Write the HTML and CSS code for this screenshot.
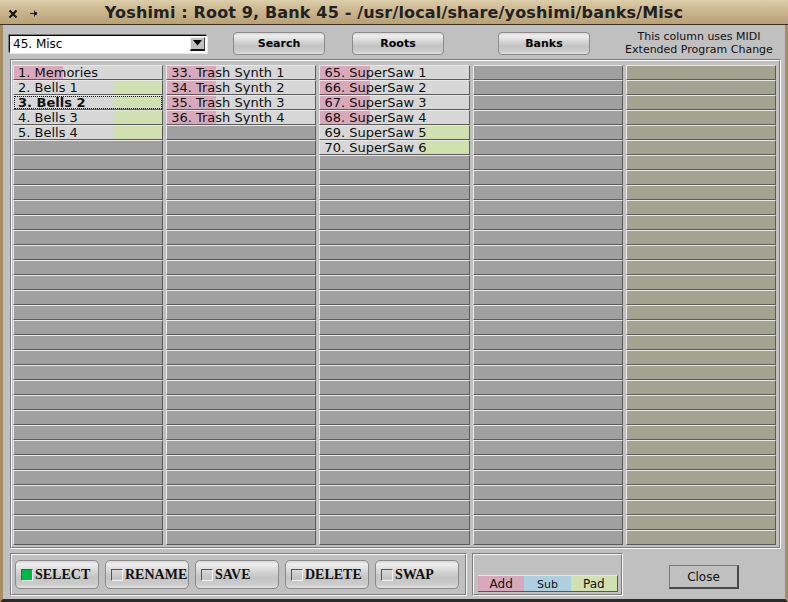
FILE: index.html
```html
<!DOCTYPE html>
<html>
<head>
<meta charset="utf-8">
<title>Yoshimi Banks</title>
<link rel="stylesheet" href="styles.css">
</head>
<body>
<div class="window">
  <div class="titlebar">
    <div class="tb-icons">
      <svg class="tb-x" width="10" height="10" viewBox="0 0 10 10"><path d="M1.5 1.5 L8.5 8.5 M8.5 1.5 L1.5 8.5" stroke="#111" stroke-width="2" fill="none"/></svg>
      <svg class="tb-pin" width="8" height="7" viewBox="0 0 8 7"><path d="M0 3.5 H4" stroke="#222" stroke-width="1" fill="none"/><rect x="4" y="0.5" width="1" height="6" fill="#222"/><rect x="5" y="2" width="2" height="3" fill="#222"/></svg>
    </div>
    <div class="title">Yoshimi : Root 9, Bank 45 - /usr/local/share/yoshimi/banks/Misc</div>
    <div></div>
  </div>
  <div class="body">
    <div class="toprow">
      <div class="choice">
        <span class="choice-text">45. Misc</span>
        <span class="choice-btn"><svg width="9" height="6" viewBox="0 0 9 6"><path d="M0 0 H9 L4.5 5.5 Z" fill="#000"/></svg></span>
      </div>
      <button class="pbtn search">Search</button>
      <button class="pbtn roots">Roots</button>
      <button class="pbtn banks">Banks</button>
      <div class="note">This column uses MIDI<br>Extended Program Change</div>
    </div>

    <div class="panel"><div class="panel-in">
      <div class="col">
        <div class="cell add">1. Memories</div>
        <div class="cell pad">2. Bells 1</div>
        <div class="cell pad sel">3. Bells 2</div>
        <div class="cell pad">4. Bells 3</div>
        <div class="cell pad">5. Bells 4</div>
        <div class="cell e"></div><div class="cell e"></div><div class="cell e"></div><div class="cell e"></div><div class="cell e"></div><div class="cell e"></div><div class="cell e"></div><div class="cell e"></div><div class="cell e"></div><div class="cell e"></div>
        <div class="cell e"></div><div class="cell e"></div><div class="cell e"></div><div class="cell e"></div><div class="cell e"></div><div class="cell e"></div><div class="cell e"></div><div class="cell e"></div><div class="cell e"></div><div class="cell e"></div>
        <div class="cell e"></div><div class="cell e"></div><div class="cell e"></div><div class="cell e"></div><div class="cell e"></div><div class="cell e"></div><div class="cell e"></div>
      </div>
      <div class="col">
        <div class="cell add">33. Trash Synth 1</div>
        <div class="cell add">34. Trash Synth 2</div>
        <div class="cell add">35. Trash Synth 3</div>
        <div class="cell add">36. Trash Synth 4</div>
        <div class="cell e"></div><div class="cell e"></div><div class="cell e"></div><div class="cell e"></div><div class="cell e"></div><div class="cell e"></div><div class="cell e"></div><div class="cell e"></div><div class="cell e"></div><div class="cell e"></div>
        <div class="cell e"></div><div class="cell e"></div><div class="cell e"></div><div class="cell e"></div><div class="cell e"></div><div class="cell e"></div><div class="cell e"></div><div class="cell e"></div><div class="cell e"></div><div class="cell e"></div>
        <div class="cell e"></div><div class="cell e"></div><div class="cell e"></div><div class="cell e"></div><div class="cell e"></div><div class="cell e"></div><div class="cell e"></div><div class="cell e"></div>
      </div>
      <div class="col">
        <div class="cell add">65. SuperSaw 1</div>
        <div class="cell add">66. SuperSaw 2</div>
        <div class="cell add">67. SuperSaw 3</div>
        <div class="cell add">68. SuperSaw 4</div>
        <div class="cell pad">69. SuperSaw 5</div>
        <div class="cell pad">70. SuperSaw 6</div>
        <div class="cell e"></div><div class="cell e"></div><div class="cell e"></div><div class="cell e"></div><div class="cell e"></div><div class="cell e"></div><div class="cell e"></div><div class="cell e"></div><div class="cell e"></div><div class="cell e"></div>
        <div class="cell e"></div><div class="cell e"></div><div class="cell e"></div><div class="cell e"></div><div class="cell e"></div><div class="cell e"></div><div class="cell e"></div><div class="cell e"></div><div class="cell e"></div><div class="cell e"></div>
        <div class="cell e"></div><div class="cell e"></div><div class="cell e"></div><div class="cell e"></div><div class="cell e"></div><div class="cell e"></div>
      </div>
      <div class="col">
        <div class="cell e"></div><div class="cell e"></div><div class="cell e"></div><div class="cell e"></div><div class="cell e"></div><div class="cell e"></div><div class="cell e"></div><div class="cell e"></div><div class="cell e"></div><div class="cell e"></div>
        <div class="cell e"></div><div class="cell e"></div><div class="cell e"></div><div class="cell e"></div><div class="cell e"></div><div class="cell e"></div><div class="cell e"></div><div class="cell e"></div><div class="cell e"></div><div class="cell e"></div>
        <div class="cell e"></div><div class="cell e"></div><div class="cell e"></div><div class="cell e"></div><div class="cell e"></div><div class="cell e"></div><div class="cell e"></div><div class="cell e"></div><div class="cell e"></div><div class="cell e"></div>
        <div class="cell e"></div><div class="cell e"></div>
      </div>
      <div class="col">
        <div class="cell x"></div><div class="cell x"></div><div class="cell x"></div><div class="cell x"></div><div class="cell x"></div><div class="cell x"></div><div class="cell x"></div><div class="cell x"></div><div class="cell x"></div><div class="cell x"></div>
        <div class="cell x"></div><div class="cell x"></div><div class="cell x"></div><div class="cell x"></div><div class="cell x"></div><div class="cell x"></div><div class="cell x"></div><div class="cell x"></div><div class="cell x"></div><div class="cell x"></div>
        <div class="cell x"></div><div class="cell x"></div><div class="cell x"></div><div class="cell x"></div><div class="cell x"></div><div class="cell x"></div><div class="cell x"></div><div class="cell x"></div><div class="cell x"></div><div class="cell x"></div>
        <div class="cell x"></div><div class="cell x"></div>
      </div>
    </div></div>

    <div class="bottom">
      <div class="frame modes"><div class="frame-in modes-in">
        <button class="mbtn"><span class="chk on"></span>SELECT</button>
        <button class="mbtn"><span class="chk"></span>RENAME</button>
        <button class="mbtn"><span class="chk"></span>SAVE</button>
        <button class="mbtn"><span class="chk"></span>DELETE</button>
        <button class="mbtn"><span class="chk"></span>SWAP</button>
      </div></div>
      <div class="frame legend"><div class="frame-in legend-in">
        <div class="legend-bar">
          <span class="lg lg-add">Add</span><span class="lg lg-sub">Sub</span><span class="lg lg-pad">Pad</span>
        </div>
      </div></div>
      <button class="close">Close</button>
    </div>
  </div>
</div>
</body>
</html>
```

FILE: styles.css
```css
* { box-sizing: border-box; }
html, body { margin: 0; padding: 0; }
body {
  width: 788px;
  height: 602px;
  overflow: hidden;
  background: #c0c0c0;
  font-family: "DejaVu Sans", sans-serif;
  color: #000;
}
.window {
  width: 788px;
  height: 602px;
  display: flex;
  flex-direction: column;
}
.titlebar {
  height: 25px;
  flex: none;
  display: grid;
  grid-template-columns: 1fr auto 1fr;
  align-items: center;
  background: linear-gradient(#dccdaa, #cbb68f 45%, #b9a176);
  border-bottom: 1px solid #3a3124;
}
.tb-icons {
  display: flex;
  align-items: center;
  padding-left: 8px;
  gap: 12px;
}
.tb-x { display: block; margin-top: 3px; }
.tb-pin { display: block; margin-top: 3px; }
.title {
  font-weight: bold;
  font-size: 16px;
  letter-spacing: 0.15px;
  color: #222;
  white-space: nowrap;
  padding-top: 1px;
}
.body {
  flex: 1;
  display: flex;
  flex-direction: column;
  border-left: 3px solid #a68e63;
  border-right: 3px solid #a68e63;
  border-bottom: 3px solid #2a2a2a;
  background: #c0c0c0;
}
.toprow {
  height: 34px;
  flex: none;
  display: flex;
  align-items: flex-start;
  padding-top: 7px;
}
.choice {
  margin-left: 6px;
  margin-top: 3px;
  width: 198px;
  height: 18px;
  display: flex;
  background: #fff;
  border-top: 1px solid #000;
  border-left: 1px solid #000;
  border-right: 1px solid #fff;
  border-bottom: 1px solid #fff;
  box-shadow: -1px -1px 0 #7a7a7a, 1px 1px 0 #e8e8e8;
}
.choice-text {
  flex: 1;
  font-size: 12px;
  line-height: 16px;
  padding-left: 3px;
}
.choice-btn {
  width: 15px;
  margin: 1px 1px 1px 0;
  background: #c0c0c0;
  border-top: 1px solid #eee;
  border-left: 1px solid #eee;
  border-right: 1px solid #444;
  border-bottom: 2px solid #111;
  display: flex;
  align-items: center;
  justify-content: center;
}
.choice-btn svg { display: block; margin-top: -2px; }
.pbtn {
  width: 92px;
  height: 23px;
  border: 1px solid #8a8a8a;
  border-radius: 4px;
  background: linear-gradient(#d9d9d9 0%, #eeeeee 14%, #d3d3d3 42%, #c3c3c3 62%, #cbcbcb 86%, #e2e2e2 100%);
  font-family: "DejaVu Sans", sans-serif;
  font-weight: bold;
  font-size: 11px;
  color: #000;
  padding: 0;
}
.search { margin-left: 26px; }
.roots { margin-left: 27px; }
.banks { margin-left: 54px; }
.note {
  margin-left: auto;
  margin-right: 6px;
  margin-top: -2px;
  width: 160px;
  text-align: center;
  font-size: 11px;
  line-height: 13px;
  color: #111;
}
.panel {
  flex: none;
  height: 490px;
  margin: 0 4px 0 7px;
  border-top: 1px solid #7c7c7c;
  border-left: 1px solid #7c7c7c;
  border-right: 1px solid #fafafa;
  border-bottom: 1px solid #fafafa;
}
.panel-in {
  height: 100%;
  border-top: 1px solid #fafafa;
  border-left: 1px solid #fafafa;
  border-right: 1px solid #7c7c7c;
  border-bottom: 1px solid #7c7c7c;
  padding: 4px 3px 2px 1px;
  display: grid;
  grid-template-columns: repeat(5, 1fr);
  column-gap: 3px;
}
.col {
  display: flex;
  flex-direction: column;
}
.cell {
  height: 15px;
  flex: none;
  border-top: 1px solid #e9e9e9;
  border-left: 1px solid #e9e9e9;
  border-right: 1px solid #5a5a5a;
  border-bottom: 1px solid #5a5a5a;
  font-size: 13px;
  line-height: 13px;
  padding-left: 4px;
  white-space: nowrap;
  overflow: hidden;
  background: #d7d7d7;
  color: #111;
}
.cell.e { background: #a0a0a0; }
.cell.x { background: #a3a391; }
.cell.add { background: linear-gradient(to right, #d9a9bb 0 33.4%, #d7d7d7 33.4%); }
.cell.pad { background: linear-gradient(to right, #d7d7d7 0 66.6%, #d0e0b0 66.6%); }
.cell.sel {
  font-weight: bold;
  outline: 1px dotted #000;
  outline-offset: -2px;
}
.bottom {
  flex: none;
  height: 43px;
  margin-top: 4px;
  display: flex;
  align-items: flex-start;
}
.frame {
  height: 43px;
  border-top: 1px solid #7c7c7c;
  border-left: 1px solid #7c7c7c;
  border-right: 1px solid #fafafa;
  border-bottom: 1px solid #fafafa;
}
.frame-in {
  height: 100%;
  border-top: 1px solid #fafafa;
  border-left: 1px solid #fafafa;
  border-right: 1px solid #7c7c7c;
  border-bottom: 1px solid #7c7c7c;
}
.modes { margin-left: 7px; width: 457px; }
.modes-in {
  display: flex;
  gap: 6px;
  padding: 5px 0 0 3px;
}
.mbtn {
  width: 84px;
  height: 29px;
  border: 1px solid #8a8a8a;
  border-radius: 5px;
  background: linear-gradient(#d9d9d9 0%, #eeeeee 12%, #d4d4d4 40%, #c4c4c4 62%, #cccccc 86%, #e2e2e2 100%);
  display: flex;
  align-items: center;
  padding: 0 0 0 5px;
  font-family: "Liberation Serif", serif;
  font-weight: bold;
  font-size: 14px;
  color: #111;
}
.chk {
  width: 12px;
  height: 12px;
  flex: none;
  margin-right: 2px;
  border-top: 1px solid #555;
  border-left: 1px solid #555;
  border-right: 1px solid #f4f4f4;
  border-bottom: 1px solid #f4f4f4;
}
.chk.on { background: #00b844; }
.legend { margin-left: 5px; width: 151px; }
.legend-in { padding: 20px 0 0 4px; }
.legend-bar {
  display: flex;
  width: 140px;
  height: 17px;
  border-top: 1px solid #e6e6e6;
  border-right: 1px solid #555;
  border-bottom: 1px solid #555;
}
.lg {
  flex: 1;
  text-align: center;
  font-size: 12px;
  line-height: 16px;
  color: #111;
}
.lg-add { background: #d9a9bb; }
.lg-sub { background: #aecfe0; font-size: 11px; line-height: 17px; }
.lg-pad { background: #d0e0b0; }
.close {
  margin-left: 46px;
  margin-top: 12px;
  width: 70px;
  height: 24px;
  background: #c0c0c0;
  border-top: 1px solid #7a7a7a;
  border-left: 1px solid #7a7a7a;
  border-right: 2px solid #4a4a4a;
  border-bottom: 2px solid #4a4a4a;
  font-family: "DejaVu Sans", sans-serif;
  font-size: 12px;
  color: #111;
  padding: 0;
}
```
